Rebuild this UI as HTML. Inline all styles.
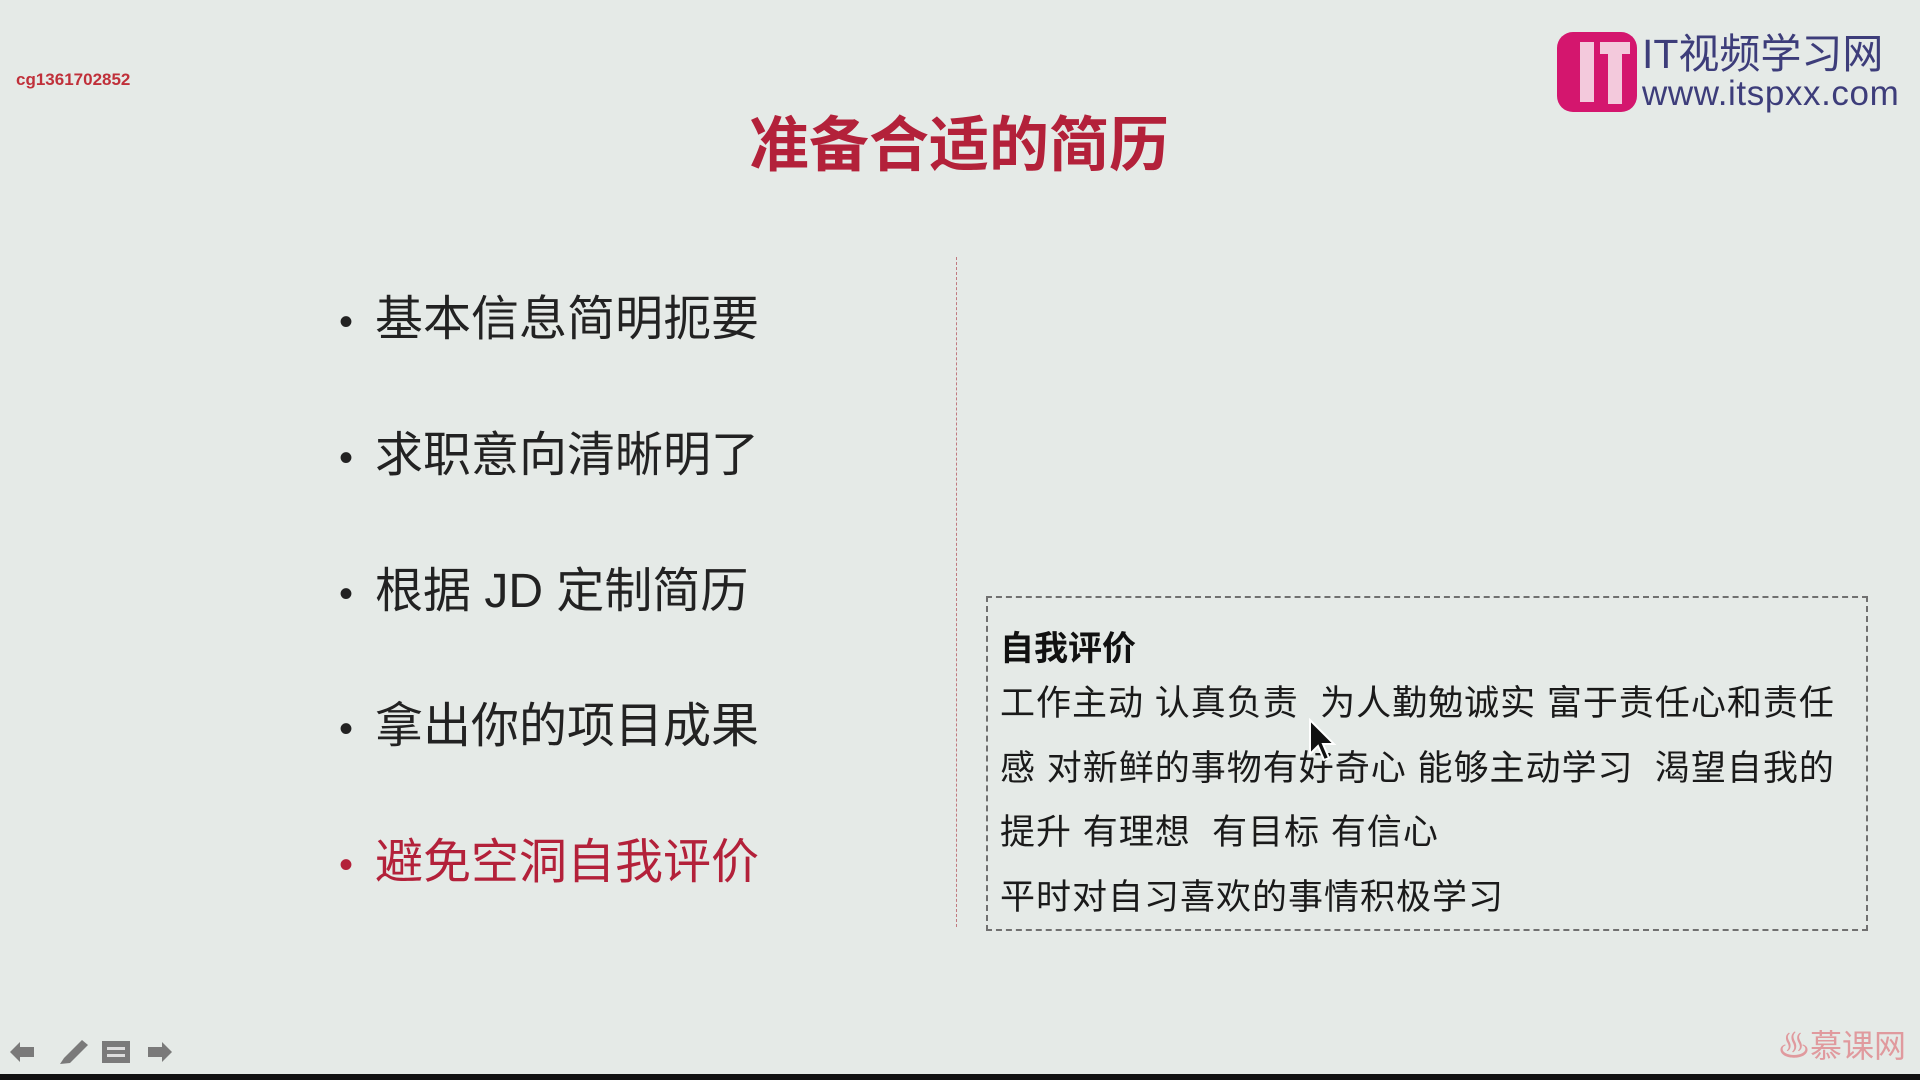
<!DOCTYPE html>
<html><head><meta charset="utf-8"><style>
body{margin:0;width:1920px;height:1080px;background:#e5eae7;position:relative;overflow:hidden;font-family:"Liberation Sans","Noto Sans CJK SC",sans-serif}
.a{position:absolute;white-space:nowrap}
.b{font-size:48px;color:#222;line-height:1}
.b span{display:inline-block;width:36px;font-size:40px}
.t{font-size:35px;color:#1a1a1a;line-height:1;letter-spacing:1px}
</style></head><body>
<div class="a" style="left:16px;top:70px;font-size:17px;font-weight:bold;color:#c0303a">cg1361702852</div>
<div class="a" style="left:0;width:1918px;text-align:center;top:116px;font-size:60px;font-weight:bold;color:#b3213a;line-height:1">准备合适的简历</div>
<div class="a" style="left:1557px;top:32px;width:80px;height:80px;background:#d4166e;border-radius:16px"></div>
<div class="a" style="left:1580px;top:42px;width:14px;height:60px;background:#f3c9dc"></div>
<div class="a" style="left:1600px;top:42px;width:30px;height:12px;background:#f3c9dc"></div>
<div class="a" style="left:1608px;top:42px;width:14px;height:62px;background:#f3c9dc"></div>
<div class="a" style="left:1642px;top:34px;font-size:41px;color:#3d3d7a;line-height:1">IT视频学习网</div>
<div class="a" style="left:1642px;top:76px;font-size:35px;letter-spacing:0.6px;color:#3d3d7a;line-height:1">www.itspxx.com</div>
<div class="a b" style="left:339px;top:296px"><span>•</span>基本信息简明扼要</div>
<div class="a b" style="left:339px;top:432px"><span>•</span>求职意向清晰明了</div>
<div class="a b" style="left:339px;top:568px"><span>•</span>根据 JD 定制简历</div>
<div class="a b" style="left:339px;top:703px"><span>•</span>拿出你的项目成果</div>
<div class="a b" style="left:339px;top:839px;color:#b3213a"><span>•</span>避免空洞自我评价</div>
<div class="a" style="left:956px;top:257px;height:670px;border-left:1px dashed #c07a80"></div>
<div class="a" style="left:986px;top:596px;width:878px;height:331px;border:2px dashed #707070"></div>
<div class="a" style="left:1000px;top:621px;font-size:34px;font-weight:bold;color:#111">自我评价</div>
<div class="a t" style="left:1000px;top:686px">工作主动 认真负责&nbsp; 为人勤勉诚实 富于责任心和责任</div>
<div class="a t" style="left:1000px;top:751px">感 对新鲜的事物有好奇心 能够主动学习&nbsp; 渴望自我的</div>
<div class="a t" style="left:1000px;top:815px">提升 有理想&nbsp; 有目标 有信心</div>
<div class="a t" style="left:1000px;top:880px">平时对自习喜欢的事情积极学习</div>
<svg class="a" style="left:1308px;top:718px" width="30" height="46"><path d="M2 2 L2 36 L10 28 L16 42 L21 40 L15 26 L26 26 Z" fill="#111" stroke="#fff" stroke-width="2"/></svg>
<svg class="a" style="left:6px;top:1036px" width="170" height="32">
<path d="M4 16 L14 6 L14 11 L28 11 L28 21 L14 21 L14 26 Z" fill="#7a7a7a"/>
<path d="M54 28 L58 22 L76 4 L82 9 L64 27 Z" fill="#7a7a7a"/>
<rect x="96" y="5" width="28" height="22" fill="#7a7a7a"/><rect x="101" y="11" width="18" height="3" fill="#ddd"/><rect x="101" y="18" width="18" height="3" fill="#ddd"/>
<path d="M166 16 L156 6 L156 11 L142 11 L142 21 L156 21 L156 26 Z" fill="#7a7a7a"/>
</svg>
<div class="a" style="left:1778px;top:1030px;font-size:32px;color:#e09a9e;line-height:1">♨慕课网</div>
<div class="a" style="left:0;top:1074px;width:1920px;height:6px;background:#111"></div>
</body></html>
